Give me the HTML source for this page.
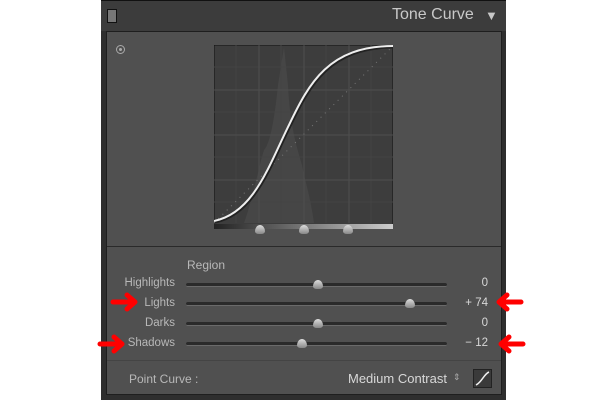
<!DOCTYPE html>
<html><head><style>
body{margin:0;width:609px;height:403px;background:#fff;position:relative;overflow:hidden;font-family:"Liberation Sans",sans-serif}
.a{position:absolute}
.lbl{position:absolute;color:#b8b8b8;font-size:11.5px;text-align:right;width:80px}
.val{position:absolute;color:#d8d8d8;font-size:11.5px;text-align:right;width:40px;left:448px}
.trk{position:absolute;left:186px;width:261px;height:3px;background:#2a2a2a;border-radius:2px;border-bottom:1px solid #6a6a6a}
.th{position:absolute;width:10px;height:9px;background:linear-gradient(#ddd,#888);border-radius:50% 50% 40% 40%/70% 70% 30% 30%;}
</style></head><body>
<div class="a" style="left:101px;top:0;width:405px;height:400px;background:#2e2e2e"></div>
<div class="a" style="left:101px;top:0;width:405px;height:30px;background:#3c3c3c;border-top:1px solid #111"></div>
<div class="a" style="left:107px;top:9px;width:8px;height:12px;background:#777;border:1px solid #111"></div>
<div class="a" style="left:392px;top:6px;color:#c8c8c8;font-size:16px">Tone Curve</div>
<div class="a" style="left:485px;top:8px;color:#c8c8c8;font-size:13px">▼</div>
<div class="a" style="left:106px;top:31px;width:396px;height:364px;background:#505050;border:1px solid #1e1e1e;box-sizing:border-box"></div>
<div class="a" style="left:116px;top:45px;width:7px;height:7px;border:1px solid #aaa;border-radius:50%"></div>
<div class="a" style="left:119px;top:48px;width:3px;height:3px;background:#aaa;border-radius:50%"></div>
<svg class="a" style="left:214px;top:45px" width="179" height="185">
<rect x="0" y="0" width="179" height="180" fill="#3d3d3d" stroke="#111"/>
<path d="M30,178 C40,150 45,120 50,105 C55,100 60,80 64,40 L70,2 L74,40 C76,80 82,100 88,120 C92,140 96,150 100,178Z" fill="#464646"/>
<g stroke="#444" stroke-width="1">
<line x1="22" y1="0" x2="22" y2="178"/><line x1="67" y1="0" x2="67" y2="178"/><line x1="112" y1="0" x2="112" y2="178"/><line x1="157" y1="0" x2="157" y2="178"/>
<line x1="0" y1="22" x2="179" y2="22"/><line x1="0" y1="67" x2="179" y2="67"/><line x1="0" y1="112" x2="179" y2="112"/><line x1="0" y1="157" x2="179" y2="157"/></g>
<g stroke="#4e4e4e"><line x1="45" y1="0" x2="45" y2="178"/><line x1="90" y1="0" x2="90" y2="178"/><line x1="135" y1="0" x2="135" y2="178"/>
<line x1="0" y1="45" x2="179" y2="45"/><line x1="0" y1="90" x2="179" y2="90"/><line x1="0" y1="135" x2="179" y2="135"/></g>
<line x1="0" y1="178" x2="179" y2="1" stroke="#777" stroke-dasharray="1,5"/>
<path d="M0,176 C40,168 55,120 75,80 C95,38 115,1 179,1" fill="none" stroke="#222" stroke-width="3" transform="translate(1,1)"/>
<path d="M0,176 C40,168 55,120 75,80 C95,38 115,1 179,1" fill="none" stroke="#eee" stroke-width="2"/>
<defs><linearGradient id="g"><stop offset="0" stop-color="#222"/><stop offset="1" stop-color="#ccc"/></linearGradient></defs>
<rect x="0" y="179" width="179" height="5" fill="url(#g)"/>
</svg>
<div class="th a" style="left:255px;top:225px"></div>
<div class="th a" style="left:299px;top:225px"></div>
<div class="th a" style="left:343px;top:225px"></div>
<div class="a" style="left:107px;top:246px;width:394px;height:1px;background:#2a2a2a"></div>
<div class="a" style="left:187px;top:258px;color:#b8b8b8;font-size:12px">Region</div>
<div class="lbl" style="left:95px;top:277px">Highlights</div>
<div class="lbl" style="left:95px;top:297px">Lights</div>
<div class="lbl" style="left:95px;top:317px">Darks</div>
<div class="lbl" style="left:95px;top:337px">Shadows</div>
<div class="trk" style="top:283px"></div><div class="trk" style="top:302px"></div><div class="trk" style="top:322px"></div><div class="trk" style="top:342px"></div>
<div class="th a" style="left:313px;top:280px"></div>
<div class="th a" style="left:405px;top:299px"></div>
<div class="th a" style="left:313px;top:319px"></div>
<div class="th a" style="left:297px;top:339px"></div>
<div class="val" style="top:277px">0</div><div class="val" style="top:297px">+ 74</div><div class="val" style="top:317px">0</div><div class="val" style="top:337px">− 12</div>
<div class="a" style="left:107px;top:360px;width:394px;height:1px;background:#444"></div>
<div class="a" style="left:129px;top:372px;color:#b8b8b8;font-size:12px">Point Curve :</div>
<div class="a" style="left:348px;top:371px;color:#d8d8d8;font-size:13px">Medium Contrast</div>
<div class="a" style="left:453px;top:372px;color:#aaa;font-size:9px">⇕</div>
<div class="a" style="left:473px;top:369px;width:17px;height:17px;background:#3a3a3a;border:1px solid #222"></div>
<svg class="a" style="left:474px;top:370px" width="17" height="17"><path d="M2,15 C8,12 10,4 15,2" stroke="#eee" stroke-width="1.5" fill="none"/></svg>
<svg class="a" style="left:0;top:0" width="609" height="403">
<g stroke="#f00" stroke-width="5" stroke-linecap="round" stroke-linejoin="round" fill="none">
<path d="M113,302 h22 M127,295 l8,7 l-8,7"/>
<path d="M100,344 h22 M114,337 l8,7 l-8,7"/>
<path d="M521,302 h-22 M507,295 l-8,7 l8,7"/>
<path d="M523,344 h-22 M509,337 l-8,7 l8,7"/>
</g></svg>
</body></html>
